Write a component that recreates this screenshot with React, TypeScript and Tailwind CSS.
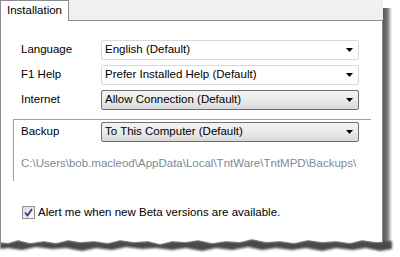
import React from 'react';

const font = { fontFamily: '"Liberation Sans", Arial, sans-serif' };

const Arrow = () => (
  <svg width="7" height="4" viewBox="0 0 7 4" className="shrink-0">
    <path d="M0 0 H7 L3.5 4 Z" fill="#000" />
  </svg>
);

const Select = ({ value, raised }: { value: string; raised?: boolean }) => (
  <div
    className={`w-[258px] h-[20px] flex items-center justify-between pl-[3px] pr-[5px] rounded-[2px] border ${
      raised
        ? 'border-[#707070] bg-gradient-to-b from-[#f3f3f3] via-[#ebebeb] to-[#d8d8d8]'
        : 'border-[#d9d9d9] bg-white'
    }`}
  >
    <span className="text-[11.5px] text-black leading-none">{value}</span>
    <Arrow />
  </div>
);

const Row = ({ label, value, raised }: { label: string; value: string; raised?: boolean }) => (
  <div className="flex items-center">
    <span className="w-[80px] text-[11.5px] text-black">{label}</span>
    <Select value={value} raised={raised} />
  </div>
);

export default function App() {
  return (
    <div className="relative w-[400px] h-[257px] bg-white overflow-hidden" style={font}>
      <div className="w-[383px] flex flex-col">
        <div className="flex h-[21px]">
          <div className="w-[69px] h-[21px] border-l border-t border-r border-[#898c95] bg-white flex items-center pl-[6px] text-[11.5px] text-black">
            Installation
          </div>
          <div className="flex-1 bg-[#f0f0f0] border-b border-[#898c95]" />
        </div>
        <div className="h-[222px] border-l border-r border-[#898c95] bg-white pt-[19px]">
          <div className="flex flex-col gap-[5px] pl-[20px]">
            <Row label="Language" value="English (Default)" />
            <Row label="F1 Help" value="Prefer Installed Help (Default)" />
            <Row label="Internet" value="Allow Connection (Default)" raised />
          </div>
          <div className="ml-[12px] mt-[9px] w-[358px] h-[62px] border-l border-t border-[#a0a0a0] pt-[2px] pl-[7px]">
            <Row label="Backup" value="To This Computer (Default)" raised />
            <div className="mt-[13px] text-[11.5px] text-[#7d8a96]">
              C:\Users\bob.macleod\AppData\Local\TntWare\TntMPD\Backups\
            </div>
          </div>
          <div className="flex items-center mt-[23px] pl-[21px] gap-[3px]">
            <div className="w-[13px] h-[13px] border border-[#8f8f8f] bg-gradient-to-br from-[#dcdcdc] to-[#fafafa] flex items-center justify-center">
              <svg width="9" height="9" viewBox="0 0 9 9">
                <path d="M1 4.5 L3.5 7.5 L8 1" stroke="#2a3f8a" strokeWidth="1.8" fill="none" />
              </svg>
            </div>
            <span className="text-[11.5px] text-black">Alert me when new Beta versions are available.</span>
          </div>
        </div>
      </div>

      {/* right drop shadow */}
      <div className="absolute left-[383px] top-[8px] w-[9px] h-[240px] bg-gradient-to-r from-[#555555] via-[#7a7a7a] to-[#ffffff00]" />

      {/* torn bottom edge */}
      <svg className="absolute left-0 top-[230px]" width="400" height="27" viewBox="0 0 400 27">
        <defs>
          <filter id="blur" x="-5%" y="-50%" width="110%" height="200%">
            <feGaussianBlur stdDeviation="1.2" />
          </filter>
        </defs>
        <path
          d="M0 12 L8 13 L18 10 L30 13 L44 11 L56 13 L68 10 L80 12 L94 11 L108 13 L120 10 L134 12 L148 11 L160 14 L172 11 L186 12 L198 10 L212 13 L226 11 L240 12 L252 9 L266 12 L280 11 L294 13 L308 10 L322 12 L336 11 L350 13 L362 10 L376 12 L392 11 L392 19 L380 21 L366 18 L352 20 L336 18 L322 21 L306 18 L292 20 L276 18 L262 20 L248 17 L232 20 L216 18 L202 21 L186 18 L172 20 L156 18 L142 19 L126 17 L112 20 L96 18 L82 21 L66 18 L52 19 L36 17 L22 20 L8 18 L0 19 Z"
          fill="#4a4a4a"
          filter="url(#blur)"
        />
        <path
          d="M0 0 L383 0 L383 12 L376 12 L362 10 L350 13 L336 11 L322 12 L308 10 L294 13 L280 11 L266 12 L252 9 L240 12 L226 11 L212 13 L198 10 L186 12 L172 11 L160 14 L148 11 L134 12 L120 10 L108 13 L94 11 L80 12 L68 10 L56 13 L44 11 L30 13 L18 10 L8 13 L0 12 Z"
          fill="#fff"
        />
        <path d="M0.5 0 V12" stroke="#898c95" />
        <path d="M382.5 0 V12" stroke="#898c95" />
      </svg>
    </div>
  );
}
